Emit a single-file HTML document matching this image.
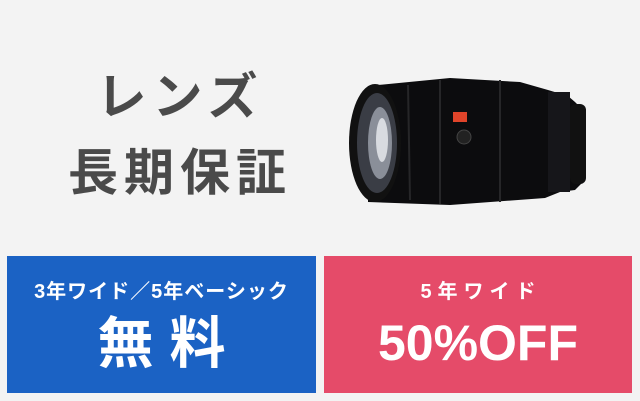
<!DOCTYPE html>
<html><head><meta charset="utf-8"><style>
body{margin:0;width:640px;height:401px;background:#f3f3f3;overflow:hidden;position:relative;font-family:"Liberation Sans","Noto Sans CJK JP",sans-serif;}
.t{position:absolute;left:40px;width:280px;text-align:center;color:#4a4a4a;font-weight:bold;font-size:50px;line-height:1;letter-spacing:6px}
.box{position:absolute;top:256px;height:137px;color:#fff;text-align:center;font-weight:bold}
.s{position:absolute;left:0;right:0;top:26px;font-size:20px;line-height:1;letter-spacing:1px}
.b{position:absolute;left:0;right:0;top:60px;font-size:56px;line-height:1}
</style></head><body>
<div class="t" style="top:72px">レンズ</div>
<div class="t" style="top:148px">長期保証</div>
<svg style="position:absolute;left:340px;top:66px" width="260" height="150" viewBox="340 66 260 150">
<path d="M368 86 L450 78 L520 82 L548 90 L568 96 L575 102 L585 112 L585 180 L575 190 L560 192 L545 198 L450 205 L368 202 Z" fill="#0c0c0e"/>
<rect x="548" y="92" width="22" height="100" fill="#16161a"/>
<rect x="570" y="104" width="16" height="80" rx="6" fill="#111"/>
<ellipse cx="375" cy="143" rx="26" ry="59" fill="#111"/>
<ellipse cx="377" cy="143" rx="20" ry="50" fill="#3a3d45"/>
<ellipse cx="380" cy="143" rx="12" ry="36" fill="#8a8f99"/>
<ellipse cx="382" cy="140" rx="6" ry="22" fill="#d8dbe0"/>
<rect x="453" y="112" width="14" height="10" fill="#e0442a"/>
<circle cx="464" cy="137" r="7" fill="#222" stroke="#444"/>
<path d="M408 85 L410 200 M440 80 L440 204 M500 80 L500 202" stroke="#262628" stroke-width="2"/>
</svg>
<div class="box" style="left:7px;width:309px;background:#1b62c4"><div class="s">3年ワイド／5年ベーシック</div><div class="b" style="letter-spacing:16px;text-indent:16px">無料</div></div>
<div class="box" style="left:324px;width:308px;background:#e54b69"><div class="s" style="letter-spacing:6px;text-indent:6px">5年ワイド</div><div class="b" style="font-size:50px;top:62px">50%OFF</div></div>
</body></html>
